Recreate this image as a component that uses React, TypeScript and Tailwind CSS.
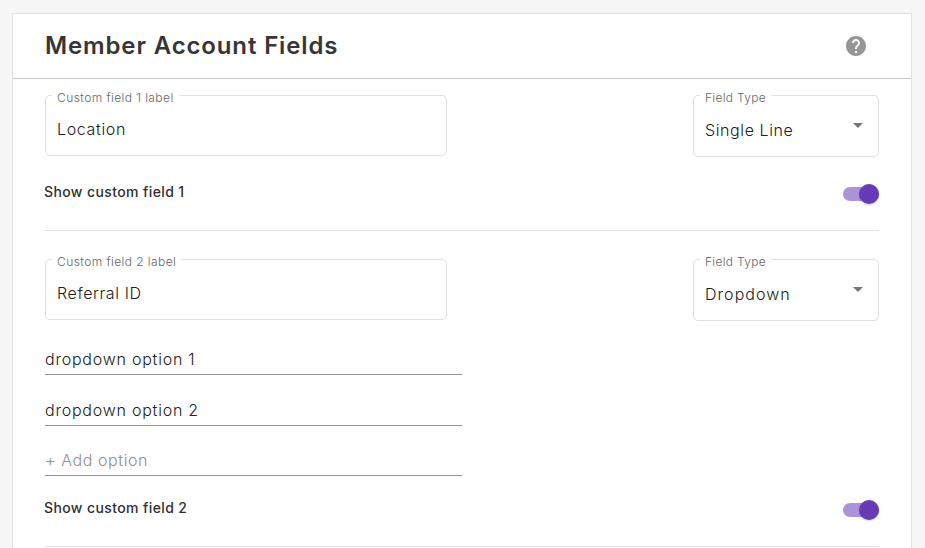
import { useState } from "react";
import type { ReactNode } from "react";

const OutlinedBox = ({ label, labelClass, className, children }: { label: string; labelClass: string; className: string; children: ReactNode }) => (
  <div className={`relative flex justify-between rounded-[5px] border border-[#e0e0e0] pl-[11px] ${className}`}>
    <span className={`absolute -top-[7px] left-1.5 whitespace-nowrap bg-white pl-[5px] text-xs leading-[18px] font-light text-[#666] ${labelClass}`}>
      {label}
    </span>
    {children}
  </div>
);

const SelectBox = ({ value, valueClass }: { value: string; valueClass: string }) => (
  <OutlinedBox label="Field Type" labelClass="w-[71px] tracking-[0.3px]" className="h-[62px] w-[186px]">
    <span className={`mt-[22px] whitespace-nowrap text-base leading-6 font-light text-[#202020] ${valueClass}`}>{value}</span>
    <svg className="mt-[27px] mr-[15px] h-[5px] w-2.5 text-[#757575]" viewBox="0 0 10 5" fill="currentColor">
      <path d="M0 0l5 5 5-5z" />
    </svg>
  </OutlinedBox>
);

const Toggle = () => {
  const [on, setOn] = useState(true);

  return (
    <button
      type="button"
      role="switch"
      aria-checked={on}
      onClick={() => setOn(!on)}
      className={`flex h-3.5 w-9 items-center rounded-full ${on ? "justify-end bg-[#ad94da]" : "justify-start bg-gray-300"}`}
    >
      <span className={`h-5 w-5 rounded-full shadow-[0_1px_2px_rgba(0,0,0,0.2)] ${on ? "bg-[#673ab7]" : "bg-gray-50"}`} />
    </button>
  );
};

const ShowRow = ({ label }: { label: string }) => (
  <div className="flex h-5 items-center justify-between">
    <span className="-mt-1 -ml-px text-sm leading-5 font-medium tracking-[0.39px]">{label}</span>
    <Toggle />
  </div>
);

const App = () => {
  return (
    <div className="h-screen overflow-hidden bg-[#f7f7f7] pt-[13px] pr-[13px] pl-3 font-['Inter',sans-serif] text-[#2f2f2f]">
      <div className="h-[600px] border border-[#e2e2e2] bg-white">
        {/* Header */}
        <div className="flex h-[65px] items-center justify-between border-b border-[#c8c8c8] pr-[43px] pl-8">
          <h1 className="text-2xl leading-8 font-semibold tracking-[0.86px] whitespace-nowrap text-[#363636]">Member Account Fields</h1>
          <svg className="h-6 w-6 text-[#969696]" viewBox="0 0 24 24" fill="currentColor">
            <path d="M12 2C6.48 2 2 6.48 2 12s4.48 10 10 10 10-4.48 10-10S17.52 2 12 2zm1 17h-2v-2h2v2zm2.07-7.75l-.9.92C13.45 12.9 13 13.5 13 15h-2v-.5c0-1.1.45-2.1 1.17-2.83l1.24-1.26c.37-.36.59-.86.59-1.41 0-1.1-.9-2-2-2s-2 .9-2 2H8c0-2.21 1.79-4 4-4s4 1.79 4 4c0 .88-.36 1.68-.93 2.25z" />
          </svg>
        </div>

        <div className="px-8 pt-4">
          {/* Custom field 1 */}
          <div className="h-[136px] border-b border-[#e0e0e0]">
            <div className="mb-[27px] flex h-[62px] items-start justify-between">
              <OutlinedBox label="Custom field 1 label" labelClass="w-[127px] tracking-[0.42px]" className="h-[61px] w-[402px]">
                <span className="mt-[21px] text-base leading-6 font-light tracking-[0.65px] text-[#202020]">Location</span>
              </OutlinedBox>
              <SelectBox value="Single Line" valueClass="tracking-[0.6px]" />
            </div>
            <ShowRow label="Show custom field 1" />
          </div>

          {/* Custom field 2 */}
          <div className="mt-7 h-[288px] border-b border-[#e0e0e0]">
            <div className="mb-[26px] flex h-[62px] items-start justify-between">
              <OutlinedBox label="Custom field 2 label" labelClass="w-[129px] tracking-[0.42px]" className="h-[61px] w-[402px]">
                <span className="mt-[21px] text-base leading-6 font-light tracking-[0.6px] text-[#202020]">Referral ID</span>
              </OutlinedBox>
              <SelectBox value="Dropdown" valueClass="tracking-[1.05px]" />
            </div>
            <div className="mb-6 w-[417px] text-base leading-6 font-light text-[#202020]">
              <div className="h-7 border-b border-[#949494] tracking-[0.77px]">dropdown option 1</div>
              <div className="mt-[23px] h-7 border-b border-[#949494] tracking-[0.77px]">dropdown option 2</div>
              <div className="mt-[22px] h-7 border-b border-[#949494] tracking-[0.6px] text-[#8f8f8f]">+ Add option</div>
            </div>
            <ShowRow label="Show custom field 2" />
          </div>
        </div>
      </div>
    </div>
  );
};

export default App;
